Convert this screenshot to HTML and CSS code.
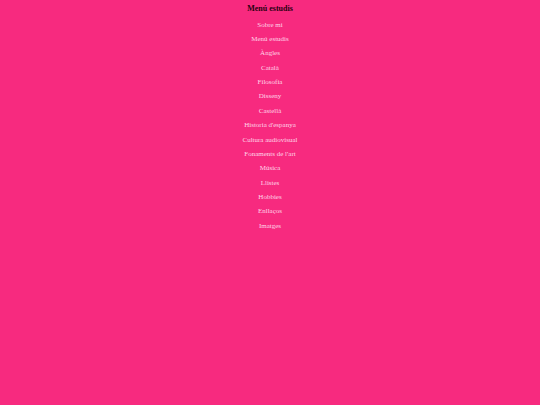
FILE: index.html
```html
<!DOCTYPE html>
<html lang="ca">
<head>
<meta charset="utf-8">
<title>Menú estudis</title>
<link rel="stylesheet" href="styles.css">
</head>
<body>
<nav class="menu">
  <h1 class="menu-title">Menú estudis</h1>
  <ul class="menu-list">
    <li><a href="#">Sobre mi</a></li>
    <li><a href="#">Menú estudis</a></li>
    <li><a href="#">Àngles</a></li>
    <li><a href="#">Català</a></li>
    <li><a href="#">Filosofia</a></li>
    <li><a href="#">Disseny</a></li>
    <li><a href="#">Castellà</a></li>
    <li><a href="#">Historia d'espanya</a></li>
    <li><a href="#">Cultura audiovisual</a></li>
    <li><a href="#">Fonaments de l'art</a></li>
    <li><a href="#">Música</a></li>
    <li><a href="#">Llistes</a></li>
    <li><a href="#">Hobbies</a></li>
    <li><a href="#">Enllaços</a></li>
    <li><a href="#">Imatges</a></li>
  </ul>
</nav>
</body>
</html>
```
FILE: styles.css
```css
html, body {
  margin: 0;
  padding: 0;
  background: #f72a7f;
  font-family: "Liberation Serif", "Times New Roman", serif;
}
.menu {
  text-align: center;
  padding-top: 4px;
}
.menu-title {
  margin: 0;
  font-size: 8px;
  line-height: 10px;
  font-weight: bold;
  color: #2a0010;
}
.menu-list {
  list-style: none;
  margin: 3.5px 0 0;
  padding: 0;
  display: flex;
  flex-direction: column;
  align-items: center;
}
.menu-list li {
  font-size: 7px;
  line-height: 14.38px;
}
.menu-list a {
  color: #ffd6e8;
  text-decoration: none;
}
```
